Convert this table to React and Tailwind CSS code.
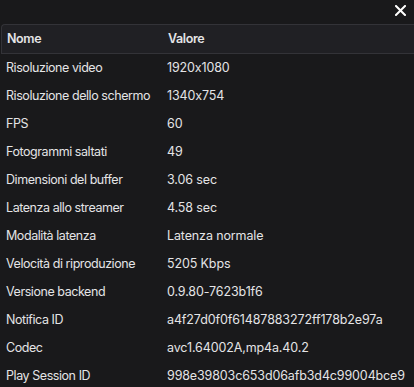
import React from 'react';

const rows = [
    ['Risoluzione video', '1920x1080'],
    ['Risoluzione dello schermo', '1340x754'],
    ['FPS', '60'],
    ['Fotogrammi saltati', '49'],
    ['Dimensioni del buffer', '3.06 sec'],
    ['Latenza allo streamer', '4.58 sec'],
    ['Modalità latenza', 'Latenza normale'],
    ['Velocità di riproduzione', '5205 Kbps'],
    ['Versione backend', '0.9.80-7623b1f6'],
    ['Notifica ID', 'a4f27d0f0f61487883272ff178b2e97a'],
    ['Codec', 'avc1.64002A,mp4a.40.2'],
    ['Play Session ID', '998e39803c653d06afb3d4c99004bce9'],
];

const App = () => {
    return (
        <div className="w-[414px] h-[387px] overflow-hidden bg-[#19191b] text-[#e4e4e6] text-[12.5px]" style={{ fontFamily: 'Inter, "Noto Sans", sans-serif' }}>
            <div className="h-6 flex justify-end items-start pt-[5px] pr-[8px]">
                <svg width="11" height="11" viewBox="0 0 11 11" className="text-white">
                    <path d="M1 1 L10 10 M10 1 L1 10" stroke="currentColor" strokeWidth="2" strokeLinecap="square" />
                </svg>
            </div>
            <div className="ml-px h-[30px] flex items-center bg-[#202024] border-y border-l border-[#333338] rounded-tl-[4px] font-semibold tracking-[-0.03em]">
                <div className="w-[166px] pl-[5px]">Nome</div>
                <div>Valore</div>
            </div>
            {rows.map(([k, v]) => (
                <div key={k} className="h-[28px] flex items-center">
                    <div className="w-[167px] pl-[6px] tracking-[-0.035em]">{k}</div>
                    <div className="tracking-[-0.01em]">{v}</div>
                </div>
            ))}
        </div>
    );
};

export default App;
